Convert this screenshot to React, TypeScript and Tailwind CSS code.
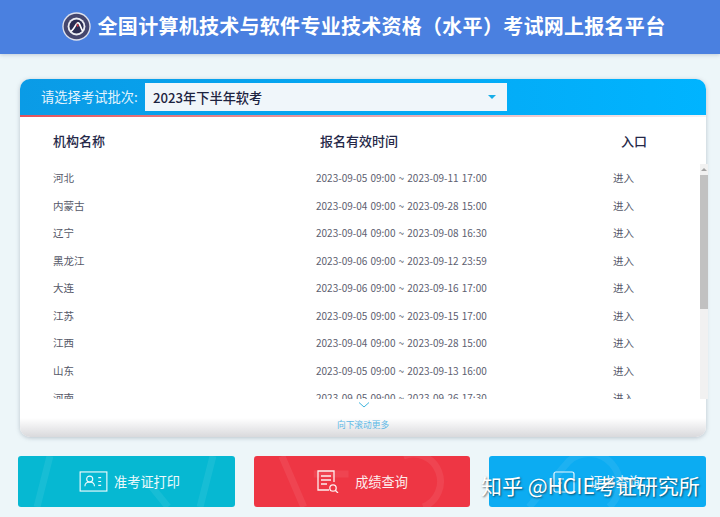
const font = { fontFamily: '"Noto Sans CJK SC", "Liberation Sans", sans-serif' };

const rows = [
  ['河北', '2023-09-05 09:00 ~ 2023-09-11 17:00'],
  ['内蒙古', '2023-09-04 09:00 ~ 2023-09-28 15:00'],
  ['辽宁', '2023-09-04 09:00 ~ 2023-09-08 16:30'],
  ['黑龙江', '2023-09-06 09:00 ~ 2023-09-12 23:59'],
  ['大连', '2023-09-06 09:00 ~ 2023-09-16 17:00'],
  ['江苏', '2023-09-05 09:00 ~ 2023-09-15 17:00'],
  ['江西', '2023-09-04 09:00 ~ 2023-09-28 15:00'],
  ['山东', '2023-09-05 09:00 ~ 2023-09-13 16:00'],
  ['河南', '2023-09-05 09:00 ~ 2023-09-26 17:30'],
];

function Logo() {
  return (
    <svg width="29" height="29" viewBox="0 0 28 28">
      <circle cx="14" cy="14" r="13.7" fill="#dfe2ee" />
      <circle cx="14" cy="14" r="12.4" fill="#45476e" />
      <circle cx="14" cy="14" r="8.6" fill="#eceef4" />
      <circle cx="14" cy="14" r="6.8" fill="#2b2d52" />
      <path d="M8.5 18.5c3-1 4.5-7 6.5-8s3 5 5 8" fill="none" stroke="#fff" strokeWidth="1.6" />
      <path d="M14 10.5l2.5 3-2 1z" fill="#c9303c" />
    </svg>
  );
}

function Streaks({ d }: { d: string }) {
  return (
    <svg className="absolute inset-0 h-full w-full" viewBox="0 0 217 51" preserveAspectRatio="none">
      <path d={d} fill="none" stroke="#fff" strokeOpacity="0.07" strokeWidth="7" />
    </svg>
  );
}

export default function App() {
  return (
    <div className="relative flex h-[517px] w-[720px] flex-col overflow-hidden bg-[#edf6f9]" style={font}>
      {/* Header */}
      <header className="flex h-[54px] shrink-0 items-center justify-center gap-[7px] bg-[#4a80e0] pb-[1px] pl-[7px] shadow-[0_1px_4px_rgba(60,80,120,0.25)]">
        <Logo />
        <h1 className="mb-[2px] text-[20px] font-bold tracking-[0.28px] text-white">全国计算机技术与软件专业技术资格（水平）考试网上报名平台</h1>
      </header>

      {/* Card */}
      <section className="mt-[25px] ml-[20px] flex h-[358px] w-[686px] shrink-0 flex-col rounded-[10px] bg-white shadow-[0_1px_4px_rgba(90,100,120,0.35)]">
        <div className="flex h-[36px] shrink-0 items-center rounded-t-[10px] bg-gradient-to-r from-[#0a9be6] to-[#00b4ff] pl-[21px]">
          <span className="w-[104px] text-[13.3px] text-[#e4f4fd]">请选择考试批次:</span>
          <div className="flex h-[28px] w-[362px] items-center justify-between bg-[#f0f6fa] pr-[11px] pl-[8px]">
            <span className="pt-[1px] text-[13.2px] font-medium text-[#1d2340]">2023年下半年软考</span>
            <span className="h-0 w-0 border-x-[4px] border-t-[4px] border-x-transparent border-t-[#18aee8]" />
          </div>
        </div>
        <div className="h-[2px] shrink-0 bg-gradient-to-r from-[#e2525c] via-[#e8a0a8] to-[#f3f3f5]" />

        <div className="flex h-[282px] shrink-0">
          <div className="flex-1 overflow-hidden">
            <div className="flex h-[47.5px] items-center text-[13px] font-medium text-[#252848]">
              <span className="ml-[33px] w-[267px]">机构名称</span>
              <span className="w-[301px]">报名有效时间</span>
              <span>入口</span>
            </div>
            {rows.map(([name, time]) => (
              <div key={name} className="flex h-[27.5px] items-center text-[10.5px] text-[#555868]">
                <span className="ml-[33px] w-[263px]">{name}</span>
                <span className="w-[297px] pb-[1px] text-[10px] [word-spacing:0.9px] text-[#5d6070]">{time}</span>
                <span>进入</span>
              </div>
            ))}
          </div>
          {/* Scrollbar */}
          <div className="mt-[47px] -mr-[2px] flex w-[8px] shrink-0 flex-col items-center bg-[#f1f1f1]">
            <span className="mt-[4px] h-0 w-0 border-x-[3px] border-b-[3px] border-x-transparent border-b-[#a3a3a3]" />
            <div className="mt-[4px] h-[134px] w-full bg-[#c1c1c1]" />
          </div>
        </div>

        <div className="relative flex flex-1 flex-col items-center rounded-b-[10px] bg-gradient-to-b from-white via-white to-[#d9d9dc]">
          <svg className="absolute top-[3px] left-[338px]" width="12" height="6" viewBox="0 0 12 6">
            <path d="M1 .5l5 4.5 5-4.5" fill="none" stroke="#3fb4dc" strokeWidth="1" />
          </svg>
          <span className="mt-[19px] text-[8.7px] text-[#5cb8e6]">向下滚动更多</span>
        </div>
      </section>

      {/* Buttons */}
      <div className="mt-[19px] ml-[18px] flex gap-[19px]">
        <div className="relative flex h-[51px] w-[217px] items-center justify-center gap-[6px] overflow-hidden rounded-[3px] bg-[#06b8d2] pl-[6px] text-[13.2px] text-[#eefafc]">
          <Streaks d="M32 0L19 51M195 0L182 51M125 20L150 51" />
          <svg className="relative" width="29" height="21" viewBox="0 0 30 22" fill="none" stroke="#eefafc" strokeWidth="1.2">
            <rect x="1" y="1" width="28" height="20" />
            <circle cx="11" cy="8.5" r="3.2" />
            <path d="M6 16c0-6 10-6 10 0" />
            <path d="M20 7h3M20 11h3M20 15h3" />
          </svg>
          <span className="relative">准考证打印</span>
        </div>
        <div className="relative flex h-[51px] w-[216px] items-center justify-center gap-[16px] overflow-hidden rounded-[3px] bg-[#ee3644] text-[13.2px] text-[#fdeeee]">
          <Streaks d="M28 0L50 51M60 18L95 18M150 0a26 26 0 0 1 20 51" />
          <svg className="relative" width="23" height="23" viewBox="0 0 23 23" fill="none" stroke="#fdeeee" strokeWidth="1.3">
            <path d="M13 20H2V1h16v11" />
            <path d="M5 6h10M5 10h10M5 14h6" />
            <circle cx="17" cy="18" r="3.2" />
            <path d="M19.5 20.5L22 23" />
          </svg>
          <span className="relative">成绩查询</span>
        </div>
        <div className="relative flex h-[51px] w-[217px] items-center justify-center gap-[14px] overflow-hidden rounded-[3px] bg-[#0cacf2] text-[13.2px] text-[#e9f7fe]">
          <Streaks d="M40 51L80 5a30 30 0 0 1 40 46" />
          <svg className="relative" width="22" height="22" viewBox="0 0 22 22" fill="none" stroke="#e9f7fe" strokeWidth="1.2">
            <rect x="1" y="1" width="20" height="20" rx="2" />
            <path d="M5 8h6M5 12h4" />
          </svg>
          <span className="relative">证书查询</span>
        </div>
      </div>

      {/* Watermark */}
      <div className="absolute top-[470px] left-[481px] text-[21px] whitespace-nowrap text-white [text-shadow:1px_1px_2px_rgba(0,0,0,0.55)]">
        知乎 @HCIE考证研究所
      </div>
    </div>
  );
}
